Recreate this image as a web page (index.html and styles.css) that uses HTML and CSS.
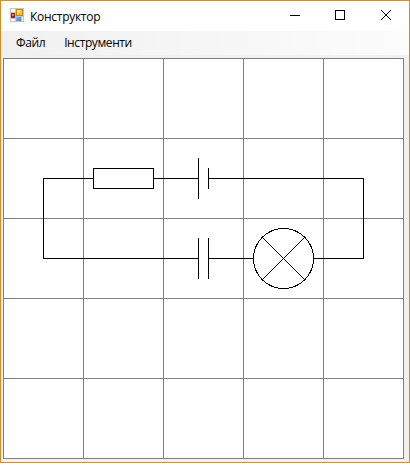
FILE: index.html
```
<!DOCTYPE html>
<html lang="uk">
<head>
<meta charset="utf-8">
<title>Конструктор</title>
<link rel="stylesheet" href="styles.css">
</head>
<body>
<div class="window">
  <header class="titlebar">
    <svg class="app-icon" width="14" height="14" viewBox="0 0 14 14" shape-rendering="crispEdges">
      <defs>
        <linearGradient id="gold" x1="0" y1="0" x2="1" y2="1"><stop offset="0" stop-color="#fff0a8"/><stop offset="1" stop-color="#efa800"/></linearGradient>
        <linearGradient id="blue" x1="0" y1="0" x2="1" y2="1"><stop offset="0" stop-color="#8bb8fa"/><stop offset="1" stop-color="#3d78e0"/></linearGradient>
      </defs>
      <path fill="#c4c4c4" d="M0 0h14v14H0z"/>
      <path fill="#fff" d="M1 1h4v3H1zM1 11h4v2H1zM12 9h1v4h-1z"/>
      <path fill="#a81e18" d="M1 5h4v5H1z"/>
      <path fill="#e0796e" d="M2 6h2v2H2z"/>
      <path fill="#c48a10" d="M6 1h7v7H6z"/>
      <path fill="url(#gold)" d="M7 2h5v5H7z"/>
      <path fill="url(#blue)" d="M6 9h5v4H6z"/>
    </svg>
    <h1 class="title">Конструктор</h1>
    <div class="controls">
      <svg width="10" height="10" viewBox="0 0 10 10" shape-rendering="crispEdges"><path fill="#000" d="M0 5h10v1H0z"/></svg>
      <svg width="10" height="10" viewBox="0 0 10 10" shape-rendering="crispEdges"><path class="stroke" d="M.5 .5h9v9h-9z"/></svg>
      <svg class="close" width="10" height="10" viewBox="0 0 10 10"><path class="stroke" d="M0 0l10 10M10 0L0 10"/></svg>
    </div>
  </header>
  <nav class="menu">
    <span class="file">Файл</span>
    <span class="tools">Інструменти</span>
  </nav>
  <main class="workspace">
    <svg class="board" width="401" height="401" viewBox="0 0 401 401" shape-rendering="crispEdges">
      <path fill="#fff" d="M0 0h401v401H0z"/>
      <path class="grid" d="M.5 0v401M80.5 0v401M160.5 0v401M240.5 0v401M320.5 0v401M400.5 0v401M0 .5h401M0 80.5h401M0 160.5h401M0 240.5h401M0 320.5h401M0 400.5h401"/>
      <path class="stroke" d="M90 120.5H40.5V200.5H195M150 120.5H195M205 120.5H360.5V200.5H310M205 200.5H250"/>
      <path class="stroke" d="M90.5 110.5h60v20h-60z"/>
      <path class="stroke" d="M195.5 100v41M205.5 110v21M195.5 180v41M205.5 180v41"/>
      <circle class="stroke" cx="280.5" cy="200.5" r="30"/>
      <path class="stroke" d="M259.5 179.5l42 42M301.5 179.5l-42 42"/>
    </svg>
  </main>
</div>
</body>
</html>
```
FILE: styles.css
```
* { box-sizing: border-box; }
body {
  margin: 0;
  background: #fff;
  color: #000;
  font: 12px/16px "Open Sans", "Noto Sans", sans-serif;
}
.window {
  width: 410px;
  height: 463px;
  border: 1px solid #e38a16;
  background: #f0f0f0;
}
.titlebar {
  display: flex;
  align-items: center;
  height: 30px;
  padding: 0 18px 0 9px;
  background: #fff;
}
.app-icon { margin-top: -2px; }
.title {
  margin: 1px 0 0 6px;
  font-size: 12px;
  font-weight: 400;
  letter-spacing: -0.28px;
}
.controls {
  display: flex;
  gap: 35px;
  margin: -2px 0 0 auto;
}
.close { margin-left: 1px; }
.controls svg, .app-icon, .board { display: block; }
.menu {
  display: flex;
  align-items: center;
  gap: 19px;
  height: 24px;
  padding-left: 15px;
  letter-spacing: -0.4px;
  background: linear-gradient(90deg, #f0f0f0, #fcfcfc);
}
.workspace { padding: 3px 0 0 2px; }
.stroke { fill: none; stroke: #000; stroke-width: 1; }
.grid { stroke: #808080; stroke-width: 1; }
```
